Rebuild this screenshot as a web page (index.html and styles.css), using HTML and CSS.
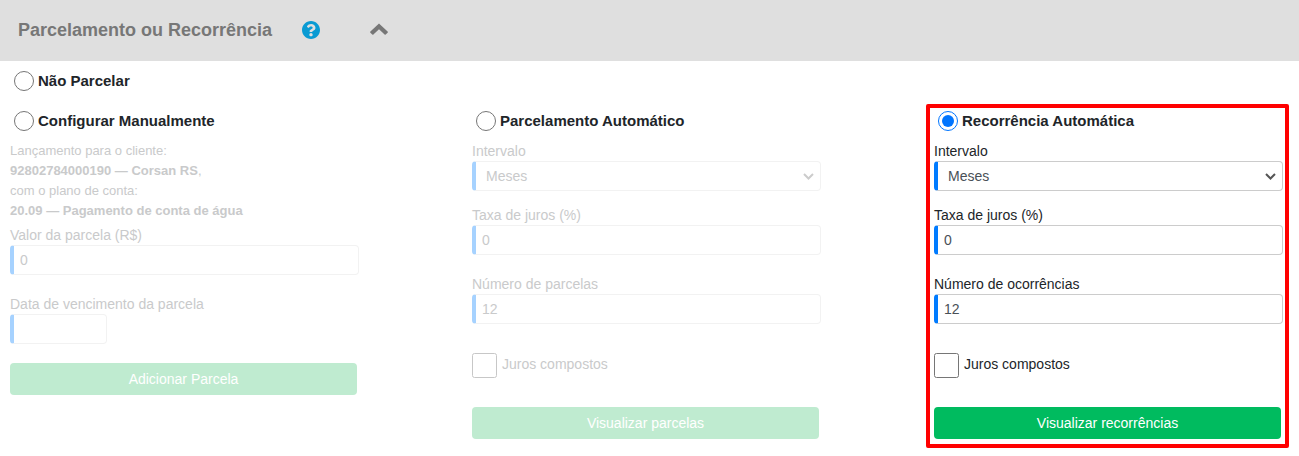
FILE: index.html
```html
<!DOCTYPE html>
<html lang="pt-BR">
<head>
<meta charset="utf-8">
<title>Parcelamento ou Recorrência</title>
<link rel="stylesheet" href="styles.css">
</head>
<body>
<header class="panel-head">
  <h2 class="panel-title">Parcelamento ou Recorrência</h2>
  <svg class="icon-help" viewBox="8 8 496 496" aria-hidden="true"><path d="M504 256c0 136.997-111.043 248-248 248S8 392.997 8 256C8 119.083 119.043 8 256 8s248 111.083 248 248zM262.655 90c-54.497 0-89.255 22.957-116.549 63.758-3.536 5.286-2.353 12.415 2.715 16.258l34.699 26.31c5.205 3.947 12.621 3.008 16.665-2.122 17.864-22.658 30.113-35.797 57.303-35.797 20.429 0 45.698 13.148 45.698 32.958 0 14.976-12.363 22.667-32.534 33.976C247.128 238.528 216 254.941 216 296v4c0 6.627 5.373 12 12 12h56c6.627 0 12-5.373 12-12v-1.333c0-28.462 83.186-29.647 83.186-106.667 0-58.002-60.165-102-116.531-102zM256 338c-25.365 0-46 20.635-46 46 0 25.364 20.635 46 46 46s46-20.636 46-46c0-25.365-20.635-46-46-46z"/></svg>
  <svg class="icon-up" viewBox="0 0 18 12" aria-hidden="true"><path d="M9 .5l8.6 8.1a.8.8 0 0 1 0 1.1l-1.9 1.9a.8.8 0 0 1-1.1 0L9 6.3l-5.6 5.3a.8.8 0 0 1-1.1 0L.4 9.7a.8.8 0 0 1 0-1.1z"/></svg>
</header>

<label class="radio-row radio-solo"><input type="radio" name="modo"><span>Não Parcelar</span></label>

<main class="columns">
  <section class="col">
    <label class="radio-row"><input type="radio" name="modo"><span>Configurar Manualmente</span></label>
    <div class="off">
      <p class="info">Lançamento para o cliente:<br><b>92802784000190 — Corsan RS</b>,<br>com o plano de conta:<br><b>20.09 — Pagamento de conta de água</b></p>
      <div class="field">
        <label class="field-label">Valor da parcela (R$)</label>
        <input class="control" type="text" value="0" readonly>
      </div>
      <div class="field">
        <label class="field-label">Data de vencimento da parcela</label>
        <input class="control control-date" type="text" readonly>
      </div>
      <button class="action" type="button">Adicionar Parcela</button>
    </div>
  </section>

  <section class="col">
    <label class="radio-row"><input type="radio" name="modo"><span>Parcelamento Automático</span></label>
    <div class="off">
      <div class="field field-tight">
        <label class="field-label">Intervalo</label>
        <select class="control control-select"><option>Meses</option></select>
      </div>
      <div class="field">
        <label class="field-label">Taxa de juros (%)</label>
        <input class="control" type="text" value="0" readonly>
      </div>
      <div class="field">
        <label class="field-label">Número de parcelas</label>
        <input class="control" type="text" value="12" readonly>
      </div>
      <label class="check-row"><input type="checkbox"><span>Juros compostos</span></label>
      <button class="action" type="button">Visualizar parcelas</button>
    </div>
  </section>

  <section class="col col-marked">
    <label class="radio-row"><input type="radio" name="modo" checked><span>Recorrência Automática</span></label>
    <div class="field field-tight">
      <label class="field-label">Intervalo</label>
      <select class="control control-select"><option>Meses</option></select>
    </div>
    <div class="field">
      <label class="field-label">Taxa de juros (%)</label>
      <input class="control" type="text" value="0" readonly>
    </div>
    <div class="field">
      <label class="field-label">Número de ocorrências</label>
      <input class="control" type="text" value="12" readonly>
    </div>
    <label class="check-row"><input type="checkbox"><span>Juros compostos</span></label>
    <button class="action" type="button">Visualizar recorrências</button>
  </section>
</main>
</body>
</html>
```

FILE: styles.css
```css
* { box-sizing: border-box; }

body {
  margin: 0;
  background: #fff;
  color: #212529;
  font-family: "Liberation Sans", Arial, sans-serif;
  font-size: 14px;
  line-height: 20px;
}

.panel-head {
  display: flex;
  align-items: center;
  height: 61px;
  padding: 0 0 2px 18px;
  background: #dfdfdf;
}

.panel-title {
  width: 284px;
  margin: 0;
  color: #777;
  font-size: 18px;
  font-weight: 700;
}

.icon-help {
  width: 18px;
  height: 18px;
  fill: #0a9bd3;
}

.icon-up {
  width: 18px;
  height: 12px;
  margin: 0 0 1px 50px;
  fill: #777;
}

.radio-row {
  display: flex;
  align-items: center;
  height: 40px;
  font-size: 15px;
  font-weight: 700;
}

.radio-row input {
  width: 20px;
  height: 20px;
  margin: 0 4px;
}

.radio-solo { margin-left: 10px; }

.columns { display: flex; align-items: flex-start; }

.col {
  width: 462px;
  padding-left: 10px;
  padding-right: 103px;
}

.col-marked {
  width: 363px;
  margin: 3px 0 0 2px;
  padding: 0 2px 5px 4px;
  border: 4px solid #f00;
  border-radius: 2px;
}

.col-marked .radio-row { height: 26px; margin-bottom: 7px; }

.info { margin: 0 0 4px; color: #c9cacb; font-size: 13px; }
.info b { font-weight: 700; }

.field { margin-bottom: 19px; }
.field-tight { margin-bottom: 14px; }

.field-label { display: block; height: 20px; }

.control {
  display: block;
  width: 349px;
  height: 30px;
  padding: 0 6px;
  border: 1px solid #ccc;
  border-left: 4px solid #007bff;
  border-radius: 4px;
  background-color: #fff;
  color: #495057;
  font-family: inherit;
  font-size: 14px;
}

.control-date { width: 97px; }

.control-select {
  padding-left: 10px;
  appearance: none;
  background-image: url("data:image/svg+xml,%3Csvg xmlns='http://www.w3.org/2000/svg' viewBox='0 0 11 7'%3E%3Cpath d='M1 1l4.5 4.5L10 1' fill='none' stroke='%23555' stroke-width='2'/%3E%3C/svg%3E");
  background-repeat: no-repeat;
  background-position: right 6px center;
  background-size: 11px 7px;
}

.check-row {
  display: flex;
  align-items: center;
  gap: 5px;
  height: 25px;
  margin: 29px 0;
}

.check-row input { width: 25px; height: 25px; margin: 0; }
.check-row span { margin-bottom: 3px; }

.action {
  display: block;
  width: 347px;
  height: 32px;
  border: 0;
  border-radius: 4px;
  background: #00bb5f;
  color: #fff;
  font-family: inherit;
  font-size: 14px;
}

.off .field-label,
.off .check-row span { color: #c9cacb; }

.off .control {
  border-color: #f2f2f2;
  border-left-color: #a6d2ff;
  color: #c9cacb;
}

.off .control-select {
  background-image: url("data:image/svg+xml,%3Csvg xmlns='http://www.w3.org/2000/svg' viewBox='0 0 11 7'%3E%3Cpath d='M1 1l4.5 4.5L10 1' fill='none' stroke='%23ccc' stroke-width='2'/%3E%3C/svg%3E");
}

.off .check-row input { opacity: .4; }
.off .action { background: #bfebd0; }
```
